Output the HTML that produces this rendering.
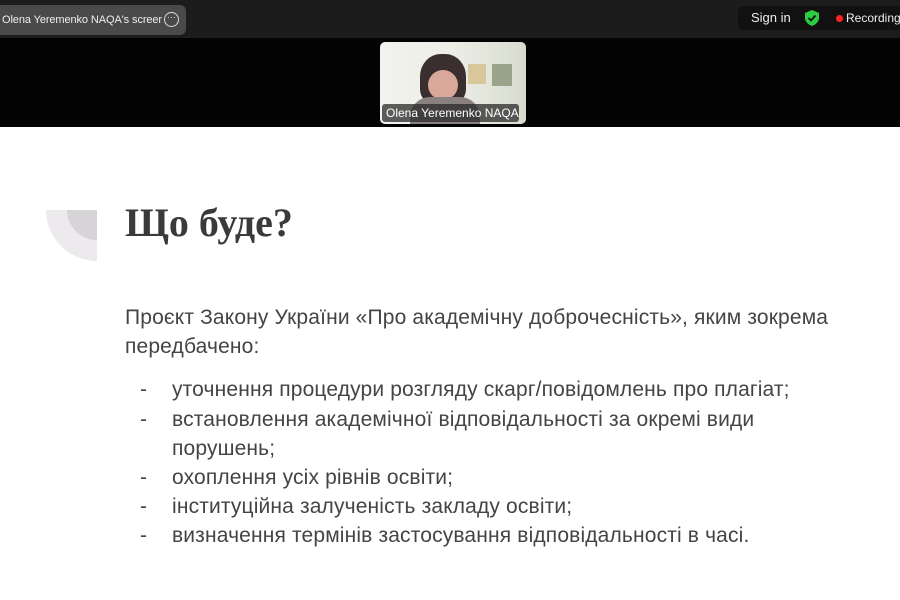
<!DOCTYPE html><html><head><meta charset="utf-8"><style>
body{margin:0;width:900px;height:600px;overflow:hidden;background:#fff;font-family:"Liberation Sans",sans-serif;position:relative}
.top{position:absolute;left:0;top:0;width:900px;height:38px;background:#1c1c1c}
.black{position:absolute;left:0;top:38px;width:900px;height:89px;background:#030303}
.pill{position:absolute;left:-6px;top:5px;width:192px;height:30px;background:#4a4a4a;border-radius:6px;color:#eee;font-size:11px;line-height:30px;padding-left:8px;box-sizing:border-box;letter-spacing:-0.1px}
.dots{position:absolute;left:170px;top:7px;width:13px;height:13px;border:1.5px solid #ddd;border-radius:50%;font-size:9px;line-height:9px;text-align:center;color:#ddd}
.right{position:absolute;left:738px;top:6px;width:170px;height:24px;background:#111;border-radius:6px;color:#eee;font-size:13px}
.vid{position:absolute;left:380px;top:42px;width:146px;height:82px;border-radius:5px;overflow:hidden;background:linear-gradient(90deg,#f2f2ee 0%,#eceee6 50%,#d8dccf 100%)}
.t{position:absolute;color:#444;font-size:21px;letter-spacing:0.15px;white-space:nowrap}
</style></head><body>
<div class="top"></div><div class="black"></div>
<div class="pill">Olena Yeremenko NAQA's screer<div class="dots">···</div></div>
<div class="right"><span style="position:absolute;left:13px;top:4px">Sign in</span>
<svg style="position:absolute;left:67px;top:4px" width="14" height="16" viewBox="0 0 14 16"><path d="M7 0L14 3V8C14 12 10 15 7 16C4 15 0 12 0 8V3Z" fill="#2ecc40"/><path d="M3.5 8L6 10.5L10.5 5.5" stroke="#111" stroke-width="1.8" fill="none"/></svg>
<span style="position:absolute;left:98px;top:9px;width:7px;height:7px;border-radius:50%;background:#f22"></span>
<span style="position:absolute;left:108px;top:5px;font-size:12px">Recording</span></div>
<div class="vid">
<div style="position:absolute;left:40px;top:12px;width:46px;height:50px;border-radius:45% 45% 30% 30%;background:#3a2e2e"></div>
<div style="position:absolute;left:48px;top:28px;width:30px;height:30px;border-radius:50%;background:#d9a89a"></div>
<div style="position:absolute;left:30px;top:55px;width:70px;height:30px;border-radius:20px 20px 0 0;background:#8a8080"></div>
<div style="position:absolute;left:88px;top:22px;width:18px;height:20px;background:#d8c79a"></div>
<div style="position:absolute;left:112px;top:22px;width:20px;height:22px;background:#9aa48a"></div>
<div style="position:absolute;left:2px;top:62px;width:137px;height:18px;background:rgba(40,40,40,.75);border-radius:3px;color:#fff;font-size:12px;line-height:18px;padding-left:4px;box-sizing:border-box">Olena Yeremenko NAQA</div>
</div>
<svg style="position:absolute;left:46px;top:210px" width="52" height="52"><path d="M0 0H51V51A51 51 0 0 1 0 0Z" fill="#eceaed"/><path d="M21 0H51V30A30 30 0 0 1 21 0Z" fill="#d6d4d7"/></svg>
<div style="position:absolute;left:125px;top:199px;font-family:'Liberation Serif',serif;font-weight:bold;font-size:40px;color:#3a3a3a">Що буде?</div>
<div class="t" style="left:125px;top:306px">Проєкт Закону України «Про академічну доброчесність», яким зокрема</div>
<div class="t" style="left:125px;top:335px">передбачено:</div>
<div class="t" style="left:140px;top:378px">-</div><div class="t" style="left:172px;top:378px">уточнення процедури розгляду скарг/повідомлень про плагіат;</div>
<div class="t" style="left:140px;top:408px">-</div><div class="t" style="left:172px;top:408px">встановлення академічної відповідальності за окремі види</div>
<div class="t" style="left:172px;top:437px">порушень;</div>
<div class="t" style="left:140px;top:466px">-</div><div class="t" style="left:172px;top:466px">охоплення усіх рівнів освіти;</div>
<div class="t" style="left:140px;top:495px">-</div><div class="t" style="left:172px;top:495px">інституційна залученість закладу освіти;</div>
<div class="t" style="left:140px;top:524px">-</div><div class="t" style="left:172px;top:524px">визначення термінів застосування відповідальності в часі.</div>
</body></html>
